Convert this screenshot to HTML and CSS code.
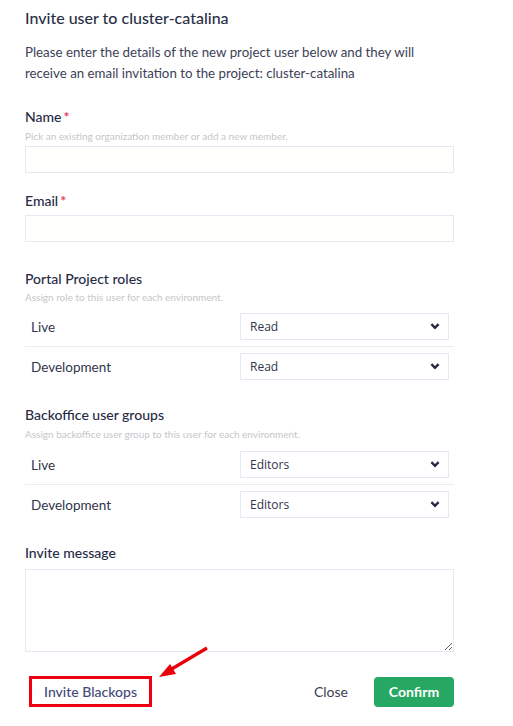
FILE: index.html
```html
<!DOCTYPE html>
<html>
<head>
<meta charset="utf-8">
<link rel="stylesheet" href="styles.css">
</head>
<body>
<div class="modal">
  <h1 class="title">Invite user to cluster-catalina</h1>
  <p class="desc">Please enter the details of the new project user below and they will receive an email invitation to the project: cluster-catalina</p>

  <div class="field">
    <div class="label">Name<span class="req">*</span></div>
    <div class="hint">Pick an existing organization member or add a new member.</div>
    <div class="input"></div>
  </div>

  <div class="field f-email">
    <div class="label">Email<span class="req">*</span></div>
    <div class="input input-email"></div>
  </div>

  <div class="field f-roles">
    <div class="label">Portal Project roles</div>
    <div class="hint">Assign role to this user for each environment.</div>
    <div class="rows">
      <div class="row sep">
        <span class="env">Live</span>
        <div class="select"><span>Read</span><svg class="chev" width="10" height="7" viewBox="0 0 10 7"><path d="M1.4 1.2 L5 4.8 L8.6 1.2" fill="none" stroke="#23283d" stroke-width="2.4"/></svg></div>
      </div>
      <div class="row">
        <span class="env">Development</span>
        <div class="select"><span>Read</span><svg class="chev" width="10" height="7" viewBox="0 0 10 7"><path d="M1.4 1.2 L5 4.8 L8.6 1.2" fill="none" stroke="#23283d" stroke-width="2.4"/></svg></div>
      </div>
    </div>
  </div>

  <div class="field f-groups">
    <div class="label">Backoffice user groups</div>
    <div class="hint">Assign backoffice user group to this user for each environment.</div>
    <div class="rows rows-groups">
      <div class="row sep">
        <span class="env">Live</span>
        <div class="select"><span>Editors</span><svg class="chev" width="10" height="7" viewBox="0 0 10 7"><path d="M1.4 1.2 L5 4.8 L8.6 1.2" fill="none" stroke="#23283d" stroke-width="2.4"/></svg></div>
      </div>
      <div class="row">
        <span class="env">Development</span>
        <div class="select"><span>Editors</span><svg class="chev" width="10" height="7" viewBox="0 0 10 7"><path d="M1.4 1.2 L5 4.8 L8.6 1.2" fill="none" stroke="#23283d" stroke-width="2.4"/></svg></div>
      </div>
    </div>
  </div>

  <div class="field f-msg">
    <div class="label">Invite message</div>
    <textarea class="textarea"></textarea>
  </div>

  <div class="footer">
    <div class="invite">Invite Blackops</div>
    <div class="actions">
      <span class="close">Close</span>
      <span class="confirm">Confirm</span>
    </div>
  </div>

  <svg class="arrow" width="513" height="726" viewBox="0 0 513 726">
    <line x1="207" y1="648" x2="170" y2="670" stroke="#e8000b" stroke-width="3.2"/>
    <polygon points="159,677 170,664 176,674" fill="#e8000b"/>
  </svg>
</div>
</body>
</html>
```

FILE: styles.css
```css
* { box-sizing: border-box; }
html, body { margin: 0; padding: 0; background: #fff; }
body {
  font-family: Lato, "Noto Sans", sans-serif;
  color: #2c3149;
  width: 513px;
  height: 726px;
  overflow: hidden;
}
.modal {
  position: relative;
  padding: 8px 59px 0 25px;
  width: 513px;
}
.title {
  margin: 0;
  font-size: 16px;
  line-height: 20px;
  font-weight: 500;
  color: #2a2f45;
}
.desc {
  margin: 14px 0 0;
  font-size: 13.3px;
  line-height: 21px;
  color: #3c4157;
  width: 420px;
}
.field { margin-top: 24px; }
.label {
  font-size: 14px;
  line-height: 18px;
  font-weight: 500;
  color: #262b45;
}
.req { color: #e5396a; margin-left: 2px; font-weight: 700; }
.hint {
  margin-top: 4px;
  font-size: 10px;
  line-height: 12px;
  color: #c6c6c9;
}
.input {
  margin-top: 4px;
  height: 27px;
  border: 1px solid #e6e9f3;
  background: #fffffd;
}
.f-email { margin-top: 19px; }
.input-email { margin-top: 5px; }
.f-roles { margin-top: 28px; }
.f-roles .hint { margin-top: 3px; }
.rows { margin-top: 4px; }
.row {
  display: flex;
  align-items: center;
  justify-content: space-between;
  padding: 6px 5px 6px 6px;
}
.row.sep { border-bottom: 1px solid #e9ecf4; }
.env { font-size: 13.5px; color: #30354b; }
.select {
  width: 209px;
  height: 27px;
  border: 1px solid #e6e9f3;
  display: flex;
  align-items: center;
  justify-content: space-between;
  padding: 0 8px 0 9px;
  font-family: "Open Sans", sans-serif;
  font-size: 12px;
  color: #30354b;
}
.f-groups { margin-top: 20px; }
.f-groups .hint { margin-top: 4px; }
.rows-groups { margin-top: 5px; }
.f-msg { margin-top: 20px; }
.textarea {
  display: block;
  margin-top: 7px;
  width: 429px;
  height: 83px;
  border: 1px solid #e6e9f3;
  background: #fff;
  resize: both;
  padding: 0;
  outline: none;
}
.footer {
  margin-top: 24px;
  display: flex;
  justify-content: space-between;
  align-items: center;
}
.invite {
  margin-left: 4px;
  width: 123px;
  height: 31px;
  border: 3px solid #ee0010;
  display: flex;
  align-items: center;
  justify-content: center;
  font-size: 14px;
  color: #464c79;
  font-weight: 500;
}
.actions { display: flex; align-items: center; }
.close {
  font-size: 14px;
  color: #3a3f55;
  margin-right: 26px;
}
.confirm {
  width: 80px;
  height: 30px;
  border-radius: 4px;
  background: #27a862;
  color: #fff;
  font-weight: 700;
  font-size: 14px;
  display: flex;
  align-items: center;
  justify-content: center;
}
.arrow {
  position: absolute;
  left: 0;
  top: 0;
  pointer-events: none;
}
```
